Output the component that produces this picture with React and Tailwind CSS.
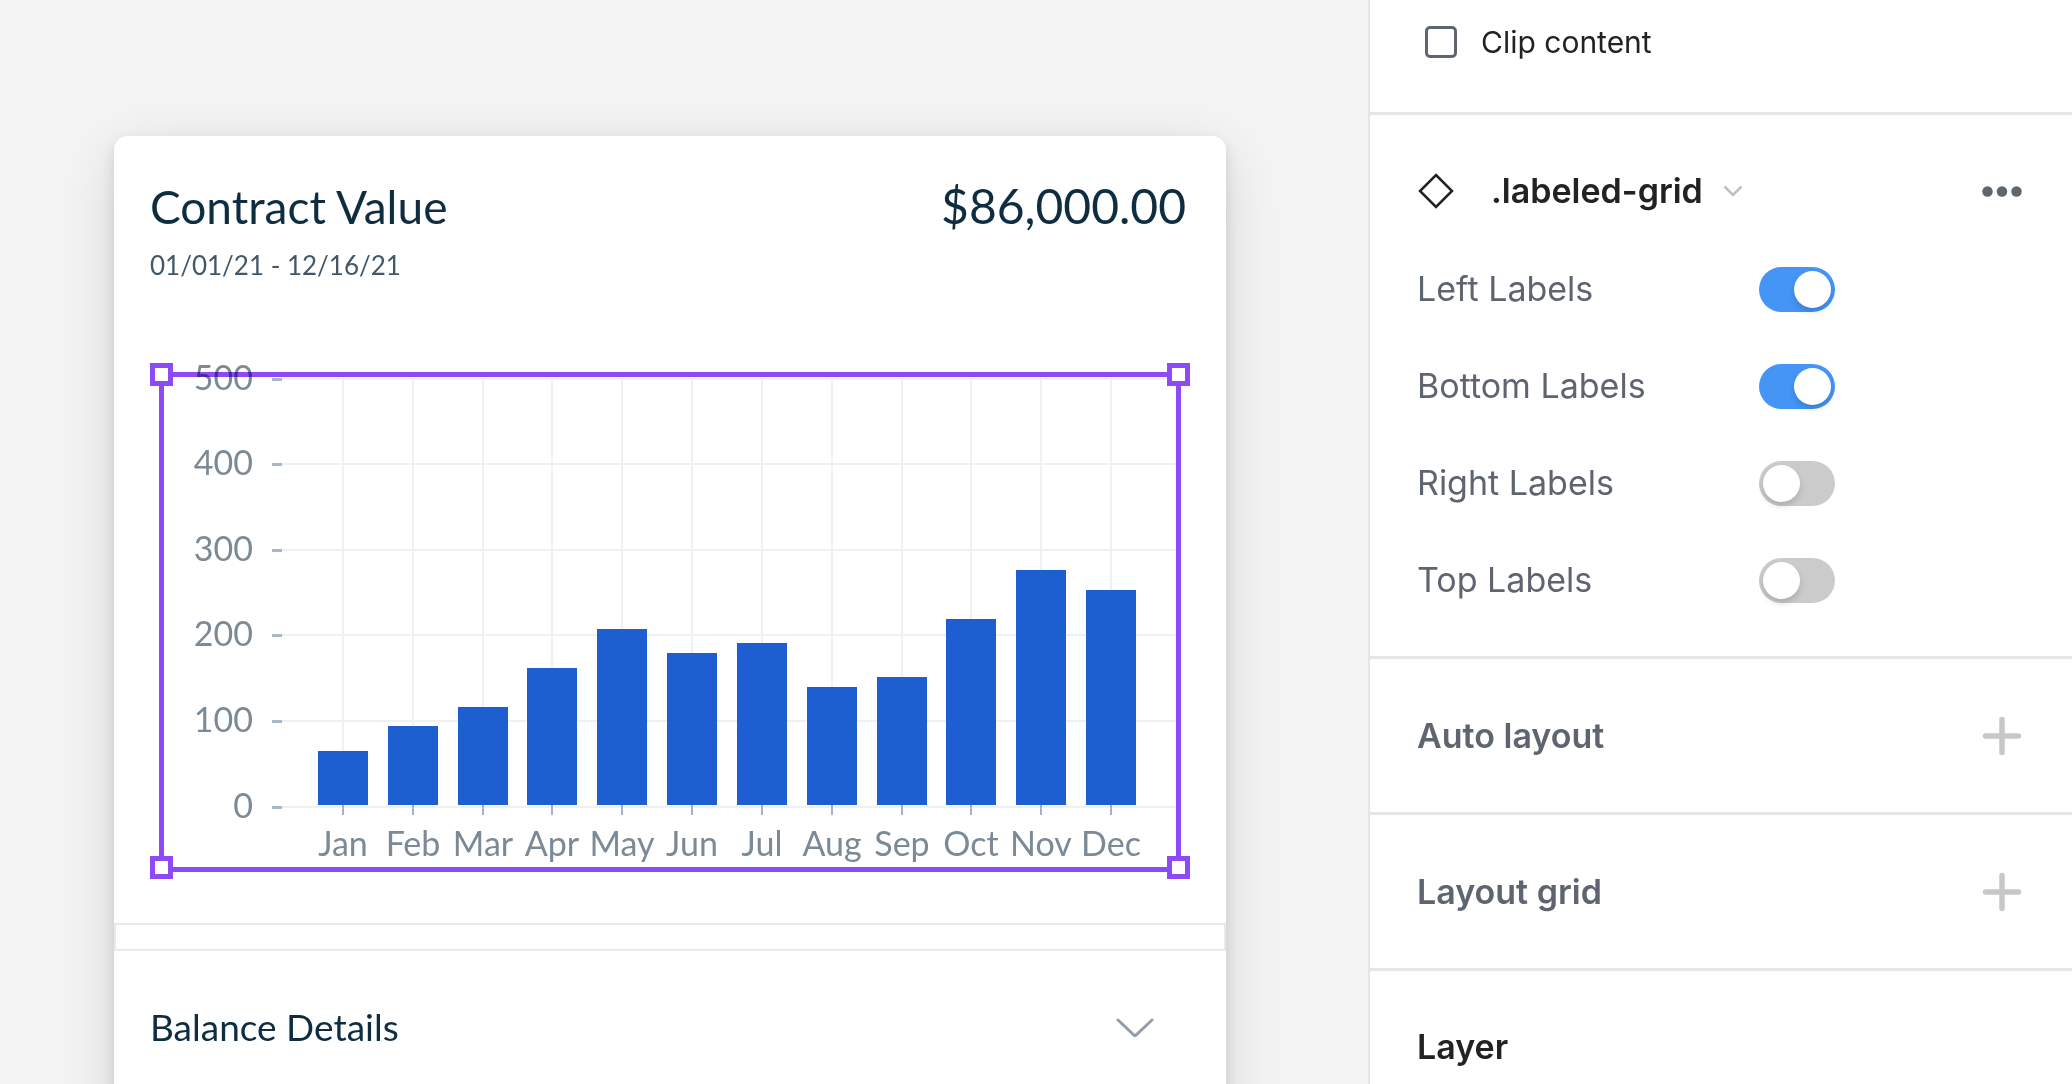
import { useState } from "react";

const MONTHS = [
  { label: "Jan", height: 54 },
  { label: "Feb", height: 79 },
  { label: "Mar", height: 98 },
  { label: "Apr", height: 137 },
  { label: "May", height: 176 },
  { label: "Jun", height: 152 },
  { label: "Jul", height: 162 },
  { label: "Aug", height: 118 },
  { label: "Sep", height: 128 },
  { label: "Oct", height: 186 },
  { label: "Nov", height: 235 },
  { label: "Dec", height: 215 },
];

const LEVELS = [
  { label: "500", y: 7 },
  { label: "400", y: 92 },
  { label: "300", y: 178 },
  { label: "200", y: 263 },
  { label: "100", y: 349 },
  { label: "0", y: 435 },
];

const FIRST_X = 184;
const STEP_X = 768 / 11;
const BASE_Y = 433;

function BarChart() {
  return (
    <svg
      viewBox="0 0 1022 500"
      className="block w-full overflow-visible"
      role="img"
      aria-label="Contract value by month"
    >
      {LEVELS.map((level) => (
        <g key={level.label}>
          <rect x="123" y={level.y - 1} width="895" height="2" fill="#eff0f1" />
          <rect x="113" y={level.y - 1} width="10" height="3" fill="#a9b8c8" />
          <text
            x="94"
            y={level.y + 11}
            textAnchor="end"
            className="fill-[#7b8a96] text-[34px]"
          >
            {level.label}
          </text>
        </g>
      ))}
      {MONTHS.map((month, i) => {
        const x = Math.round(FIRST_X + i * STEP_X);
        return (
          <g key={month.label}>
            <rect x={x - 1} y="7" width="2" height="427" fill="#eff0f1" />
            <rect x={x - 25} y={BASE_Y - month.height} width="50" height={month.height} fill="#1d5fd0" />
            <rect x={x - 1} y={BASE_Y} width="2" height="10" fill="#a3b3c4" />
            <text x={x} y="484" textAnchor="middle" className="fill-[#7b8a96] text-[34px]">
              {month.label}
            </text>
          </g>
        );
      })}
    </svg>
  );
}

function SelectionFrame() {
  const handle = "absolute size-[23px] border-5 border-[#8f4af7] bg-white";
  return (
    <>
      <div className="pointer-events-none absolute inset-0 border-5 border-[#8f4af7] mix-blend-multiply" />
      <span className={`${handle} -top-[9px] -left-[9px]`} />
      <span className={`${handle} -top-[9px] -right-[9px]`} />
      <span className={`${handle} -bottom-[7px] -left-[9px]`} />
      <span className={`${handle} -right-[9px] -bottom-[7px]`} />
    </>
  );
}

function ContractCard() {
  return (
    <article className="-mb-20 flex flex-1 flex-col rounded-t-[14px] bg-white pt-[46px] font-[Lato,sans-serif] text-[#0f2d40] shadow-[0_16px_64px_rgba(0,0,0,0.12),0_6px_14px_rgba(0,0,0,0.12)]">
      <header className="pr-10 pl-9">
        <div className="flex items-baseline justify-between">
          <h1 className="text-[46px] leading-12">Contract Value</h1>
          <p className="text-[48px] leading-12">$86,000.00</p>
        </div>
        <p className="mt-[14px] text-[26px] leading-10 text-[#425869]">01/01/21 - 12/16/21</p>
      </header>
      <div className="relative mx-[45px] mt-[87px]">
        <BarChart />
        <SelectionFrame />
      </div>
      <div className="mt-[51px] h-[28px] border-2 border-[#e6eaed]" />
      <button type="button" className="flex items-center justify-between pt-[52px] pr-[72px] pl-9 text-left">
        <span className="text-[37px] leading-12">Balance Details</span>
        <svg className="h-5 w-[38px]" viewBox="0 0 38 20" fill="none" aria-hidden="true">
          <path d="M2 3 L19 19 L36 3" stroke="#8f9dac" strokeWidth="3" strokeLinecap="round" strokeLinejoin="round" />
        </svg>
      </button>
    </article>
  );
}

function Toggle({ label, defaultOn }) {
  const [on, setOn] = useState(defaultOn);
  return (
    <label className="flex h-[97px] items-center">
      <span className="w-[342px] pb-[2px] text-[34px] leading-10 text-[#5f6570]">{label}</span>
      <input
        type="checkbox"
        role="switch"
        checked={on}
        onChange={(e) => setOn(e.target.checked)}
        className="h-[45px] w-[76px] appearance-none rounded-full bg-[#cbcbcb] p-1 before:block before:size-[37px] before:rounded-full before:bg-white before:shadow-[0_4px_6px_rgba(0,0,0,0.15)] before:content-[''] checked:bg-[#4595f7] checked:before:ml-[31px]"
      />
    </label>
  );
}

function AddSection({ title }) {
  return (
    <section className="flex items-center justify-between border-b-3 border-[#e6e6e6] pt-[57px] pr-[50px] pb-[56px] pl-[47px]">
      <h2 className="text-[34px] leading-10 font-semibold text-[#5f6570]">{title}</h2>
      <button type="button" aria-label={`Add ${title}`}>
        <svg className="size-[40px]" viewBox="0 0 40 40" aria-hidden="true">
          <path d="M20 3.500V36.500M3.500 20H36.500" stroke="#c7c7c7" strokeWidth="5.500" strokeLinecap="round" />
        </svg>
      </button>
    </section>
  );
}

function PropertiesPanel() {
  return (
    <aside className="w-[704px] shrink-0 overflow-hidden border-l-2 border-[#e5e5e5] bg-white font-[Inter,sans-serif] text-[#222222]">
      <div className="flex h-[115px] border-b-3 border-[#e6e6e6] pt-[22px] pl-[55px]">
        <label className="flex h-10 items-center gap-6 text-[30px] leading-10">
          <input type="checkbox" className="size-8 appearance-none rounded-[5px] border-3 border-[#5f6670] checked:bg-[#5f6670]" />
          Clip content
        </label>
      </div>
      <section className="border-b-3 border-[#e6e6e6] pt-[52px] pb-[27px] pl-[47px]">
        <header className="flex h-[48px] items-center pr-[50px]">
          <svg className="size-[38px]" viewBox="0 0 38 38" fill="none" aria-hidden="true">
            <path d="M19 3 L35 19 L19 35 L3 19 Z" stroke="#222222" strokeWidth="2.500" />
          </svg>
          <h2 className="ml-9 text-[34px] leading-10 font-semibold">.labeled-grid</h2>
          <button type="button" aria-label="Swap component" className="ml-5">
            <svg className="h-3 w-5" viewBox="0 0 20 12" fill="none" aria-hidden="true">
              <path d="M1.500 1.500 L10 10 L18.500 1.500" stroke="#c0c0c0" strokeWidth="2.500" />
            </svg>
          </button>
          <button type="button" aria-label="More options" className="ml-auto">
            <svg className="h-[11px] w-10" viewBox="0 0 40 11" fill="#5f6670" aria-hidden="true">
              <circle cx="5.500" cy="5.500" r="5.250" />
              <circle cx="20" cy="5.500" r="5.250" />
              <circle cx="34.500" cy="5.500" r="5.250" />
            </svg>
          </button>
        </header>
        <div className="mt-[26px]">
          <Toggle label="Left Labels" defaultOn />
          <Toggle label="Bottom Labels" defaultOn />
          <Toggle label="Right Labels" defaultOn={false} />
          <Toggle label="Top Labels" defaultOn={false} />
        </div>
      </section>
      <AddSection title="Auto layout" />
      <AddSection title="Layout grid" />
      <section className="pt-14 pl-[47px]">
        <h2 className="text-[34px] leading-10 font-semibold">Layer</h2>
      </section>
    </aside>
  );
}

export default function App() {
  return (
    <div className="flex h-screen overflow-hidden bg-[#f4f4f4]">
      <main className="flex min-w-0 flex-1 flex-col overflow-hidden pt-[136px] pr-[142px] pl-[114px]">
        <ContractCard />
      </main>
      <PropertiesPanel />
    </div>
  );
}
